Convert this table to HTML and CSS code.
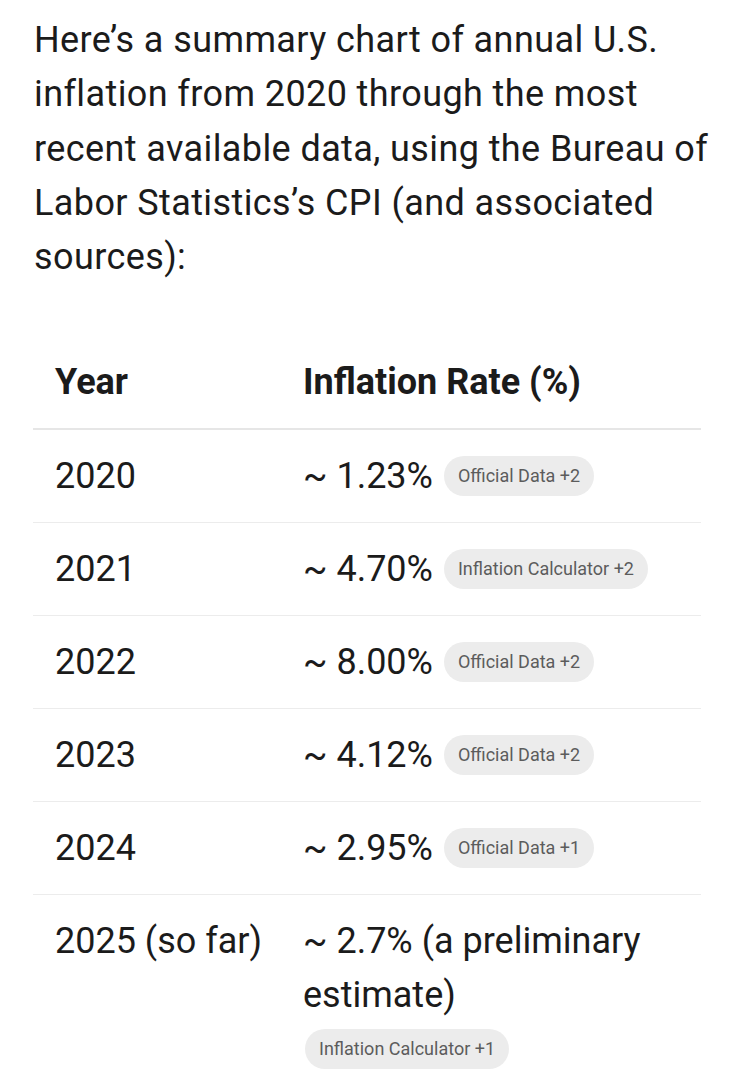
FILE: index.html
```html
<!DOCTYPE html>
<html lang="en">
<head>
<meta charset="utf-8">
<title>U.S. inflation summary</title>
<link rel="stylesheet" href="styles.css">
</head>
<body>
<main class="answer">
  <p class="intro">Here’s a summary chart of annual U.S. inflation from 2020 through the most recent available data, using the Bureau of Labor Statistics’s CPI (and associated sources):</p>
  <table class="rates">
    <thead>
      <tr><th class="col-year">Year</th><th class="col-rate">Inflation Rate (%)</th></tr>
    </thead>
    <tbody>
      <tr><td class="col-year">2020</td><td class="col-rate">~ 1.23% <span class="chip">Official Data +2</span></td></tr>
      <tr><td class="col-year">2021</td><td class="col-rate">~ 4.70% <span class="chip">Inflation Calculator +2</span></td></tr>
      <tr><td class="col-year">2022</td><td class="col-rate">~ 8.00% <span class="chip">Official Data +2</span></td></tr>
      <tr><td class="col-year">2023</td><td class="col-rate">~ 4.12% <span class="chip">Official Data +2</span></td></tr>
      <tr><td class="col-year">2024</td><td class="col-rate">~ 2.95% <span class="chip">Official Data +1</span></td></tr>
      <tr><td class="col-year">2025 (so far)</td><td class="col-rate">~ 2.7% (a preliminary estimate) <span class="chip">Inflation Calculator +1</span></td></tr>
    </tbody>
  </table>
</main>
</body>
</html>
```
FILE: styles.css
```css
html, body {
  margin: 0;
  padding: 0;
  background: #ffffff;
}
body {
  font-family: Roboto, "Noto Sans", sans-serif;
  color: #1b1b1b;
}
.answer {
  padding: 13px 0 0 33px;
}
.intro {
  margin: 0 0 0 1px;
  font-size: 36px;
  line-height: 54.3px;
  letter-spacing: 0.4px;
}
.rates {
  margin-top: 52px;
  width: 668px;
  border-collapse: collapse;
  table-layout: fixed;
}
.rates th,
.rates td {
  text-align: left;
  vertical-align: top;
  padding: 19px 34px 19px 22px;
  font-size: 36px;
  line-height: 54px;
}
.rates th {
  font-weight: 700;
  border-bottom: 2px solid #e6e6e6;
}
.rates td {
  font-weight: 400;
  border-bottom: 1px solid #ececec;
}
.rates tbody tr:last-child td {
  border-bottom: none;
}
.rates .col-year {
  width: 248px;
  padding-right: 0;
  box-sizing: border-box;
  white-space: nowrap;
}
.chip {
  display: inline-block;
  vertical-align: middle;
  margin-left: 2px;
  padding: 0 14px;
  height: 40px;
  line-height: 40px;
  border-radius: 20px;
  background: #ececec;
  color: #5c5c5c;
  font-size: 18px;
  letter-spacing: 0;
  position: relative;
  top: -3px;
}
```
